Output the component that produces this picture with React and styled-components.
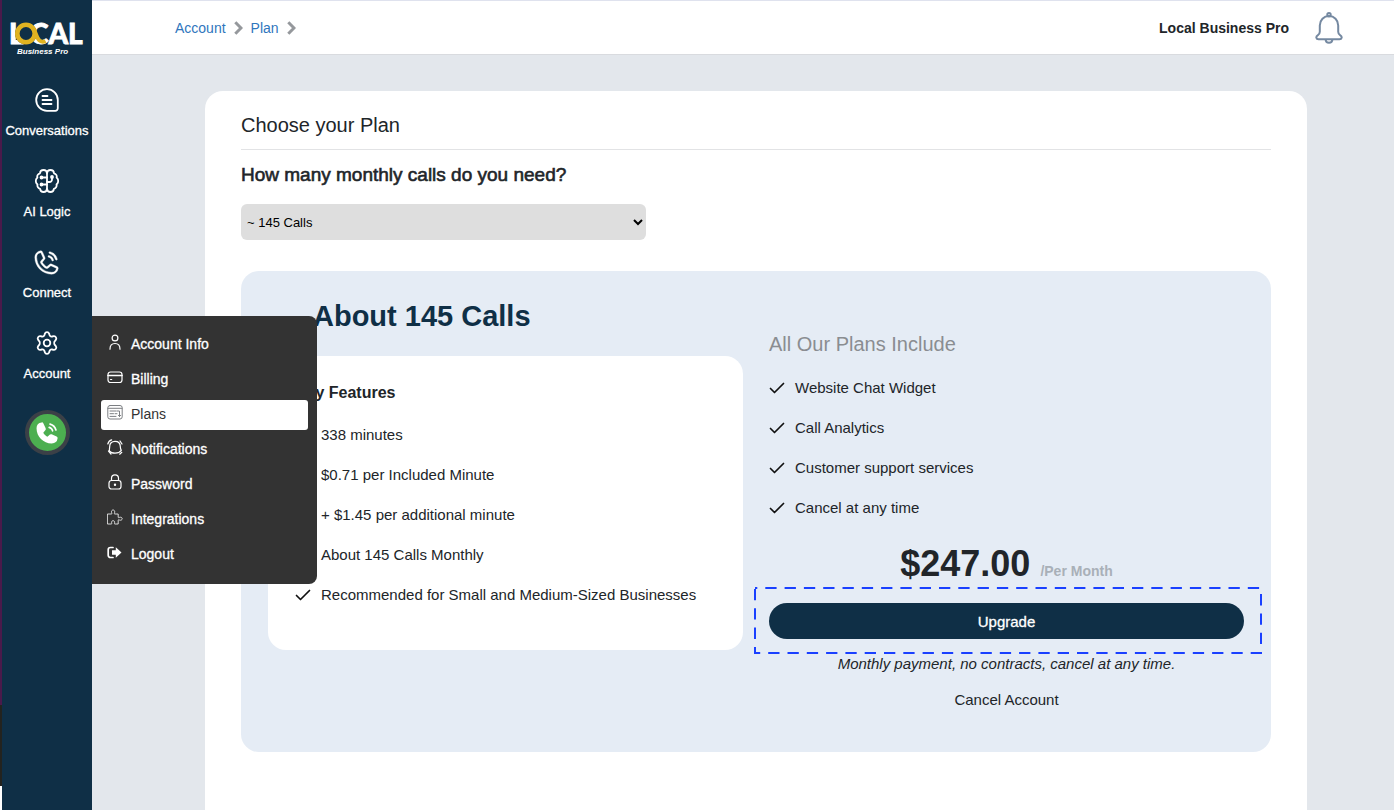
import React, { useState } from 'react';
import styled, { createGlobalStyle } from 'styled-components';
import { PiPhoneCall, PiPhoneCallFill } from 'react-icons/pi';

const navy = '#0f2f46';
const ink = '#212529';

const includedFeatures = [
  'Website Chat Widget',
  'Call Analytics',
  'Customer support services',
  'Cancel at any time',
];

const plans = {
  145: {
    title: 'About 145 Calls',
    price: '$247.00',
    features: [
      '338 minutes',
      '$0.71 per Included Minute',
      '+ $1.45 per additional minute',
      'About 145 Calls Monthly',
      'Recommended for Small and Medium-Sized Businesses',
    ],
  },
};

const Logo = () => (
  <LogoSvg viewBox="-1 -8 76 48" role="img" aria-label="Local Business Pro">
    <g fontFamily="Lato, sans-serif" fontWeight="900" fontSize="28" fill="#fff" stroke="#fff" strokeWidth=".8">
      <text x="-1" y="24">L</text>
      <text x="20" y="24">CAL</text>
    </g>
    <circle cx="16" cy="13.500" r="10.800" fill={navy} />
    <circle cx="16" cy="13.500" r="8.700" fill="none" stroke="#e0b321" strokeWidth="4.600" />
    <path d="M22.500 7.500c3 3 3.500 10 7 13 2 1.500 4 1.500 6 .5" fill="none" stroke="#e0b321" strokeWidth="4" />
    <text x="7" y="34" fontFamily="Liberation Sans, Arial, sans-serif" fontSize="8" fontWeight="700" fontStyle="italic" fill="#fff">
      Business Pro
    </text>
  </LogoSvg>
);

const ChatIcon = () => (
  <NavSvg viewBox="0 0 24 24">
    <path d="M12 1.200a10.800 10.800 0 1 0 0 21.600h8.300a2.500 2.500 0 0 0 2.500-2.500V12A10.800 10.800 0 0 0 12 1.200z" />
    <path d="M7.500 8h5M7.500 12h9M7.500 16h9" />
  </NavSvg>
);

const BrainIcon = () => (
  <NavSvg viewBox="0 0 24 24">
    <path d="M12 4.200C11.800 2.200 10.300 1 8.600 1 6.600 1 5.100 2.400 5 4.300 3 4.800 1.800 6.600 2.400 8.600 1.300 9.500.8 10.700.8 12s.6 2.600 1.700 3.500c-.5 2.100.8 3.900 2.600 4.300.2 1.900 1.700 3.200 3.500 3.200s3.200-1.300 3.400-3.200z" />
    <path d="M12 4.200C12.200 2.200 13.700 1 15.400 1c2 0 3.500 1.400 3.600 3.300 2 .5 3.200 2.300 2.600 4.300 1.100.9 1.600 2.100 1.600 3.400s-.6 2.600-1.700 3.500c.5 2.100-.8 3.900-2.600 4.300-.2 1.900-1.700 3.200-3.500 3.200S12.200 21.700 12 19.800" />
    <path d="M12 8.500H7M12 15.500H7M12 13h2.500A2.500 2.500 0 0 0 17 10.500V8.500" />
    <circle cx="6.500" cy="8.500" r="1" />
    <circle cx="6.500" cy="15.500" r="1" />
    <circle cx="17" cy="8" r="1" />
  </NavSvg>
);

const GearIcon = () => (
  <NavSvg viewBox="0 0 24 24">
    <path d="M9.900 2.600c.7-1.900 3.500-1.900 4.200 0l.5 1.500c.4 1 1.400 1.600 2.500 1.400l1.600-.3c2-.3 3.400 2.100 2.100 3.700l-1 1.200c-.8.900-.8 2.900 0 3.800l1 1.200c1.300 1.600-.1 4-2.100 3.700l-1.600-.3c-1.100-.2-2.100.4-2.500 1.400l-.5 1.500c-.7 1.900-3.500 1.900-4.200 0l-.5-1.500c-.4-1-1.400-1.600-2.500-1.400l-1.600.3c-2 .3-3.400-2.100-2.100-3.700l1-1.200c.8-.9.8-2.900 0-3.800l-1-1.200c-1.300-1.600.1-4 2.100-3.700l1.600.3c1.100.2 2.100-.4 2.500-1.400z" />
    <circle cx="12" cy="12" r="3.300" />
  </NavSvg>
);

const BellIcon = () => (
  <svg width="28" height="32" viewBox="0 0 28 32" fill="none" stroke="#7589a1" strokeWidth="2" aria-hidden="true">
    <path d="M4.800 13.500C4.800 8 8.800 4 14 4s9.200 4 9.200 9.500v6.200c0 1.500.6 2.500 1.900 3.400 2.600 1.700 1.700 4.100-.6 4.100h-21c-2.300 0-3.200-2.400-.6-4.100 1.300-.9 1.900-1.900 1.900-3.400z" />
    <circle cx="14" cy="2.800" r="1.700" />
    <path d="M10.600 27.500c.2 4.300 6.600 4.300 6.800 0" />
  </svg>
);

const Chevron = () => (
  <svg width="9" height="14" viewBox="0 0 9 14" fill="none" stroke="#95989c" strokeWidth="3" aria-hidden="true">
    <path d="M1.300 1.300 7 7l-5.700 5.700" />
  </svg>
);

const Check = () => (
  <svg width="16" height="12" viewBox="0 0 16 12" fill="none" stroke="#111" strokeWidth="1.700" strokeLinecap="round" strokeLinejoin="round" aria-hidden="true">
    <path d="M1.500 6.500 5.500 10.500 14.500 1.500" />
  </svg>
);

const menuIcons = {
  user: (
    <>
      <circle cx="8" cy="4" r="2.900" />
      <path d="M3 15.200c0-3.500 2-5.700 5-5.700s5 2.200 5 5.700" />
    </>
  ),
  card: (
    <>
      <rect x="1" y="3" width="14" height="10.500" rx="2.500" />
      <path d="M1 6.500h14" strokeWidth="1.600" />
      <path d="M3.500 10.500h1.200" />
    </>
  ),
  plan: (
    <g stroke="#7c7f83" strokeWidth="1">
      <rect x=".8" y="1.500" width="14.400" height="13.500" rx="2.200" />
      <path d="M1 4.300h14M3 7h6M3 9.700h3.500M8 9.700h2M3 12.400h6M10 7h2.500v5.500M11.400 11.300l1.100 1.200 1.100-1.200" />
    </g>
  ),
  alarm: (
    <>
      <path d="M8 2.300c3.300 0 5.300 2.300 5.300 5.300 0 1.700.4 2.800 1 3.700-1 1.500-3.700 2.800-6.300 2.800s-4.600-.8-5.400-2c-.7-1 .1-2.600.1-4.500 0-3.300 2-5.300 5.300-5.300z" />
      <path d="M.8 5C1.300 3 2.800 1.300 4.700.8M15 5l-2-3M1.500 12l2.500 3M14.800 13.300 12.700 15.200" />
    </>
  ),
  lock: (
    <>
      <rect x="2" y="6.500" width="12" height="8.500" rx="2.500" />
      <path d="M4.500 6.500V4.300a3.500 3.500 0 0 1 7 0v2.200" />
      <circle cx="8" cy="10.700" r=".6" fill="currentColor" />
    </>
  ),
  puzzle: (
    <path
      strokeWidth=".8"
      d="M.8 5h3.700c.6 0 .3-.8.1-1.400C4.200 2 5 1 6.100 1s1.900 1 1.500 2.600c-.2.600-.5 1.400.1 1.400h3.500v3.200c0 .7.700.4 1.200.2 1.500-.5 2.800.1 2.800 1.300s-1.300 1.900-2.800 1.300c-.5-.2-1.200-.5-1.200.2V15H7.800c-.6 0-.3-.8-.2-1.400.2-1.200-.5-1.900-1.500-1.900s-1.700.7-1.500 1.900c.1.600.4 1.400-.2 1.400H.8z"
    />
  ),
  logout: (
    <>
      <path d="M6 3.500H3.500A2.300 2.300 0 0 0 1.200 5.800v5.400a2.300 2.300 0 0 0 2.300 2.300H6" strokeWidth="1.700" />
      <path d="M5 6.300h3.800v-3l5.700 5.200-5.700 5.200v-3H5z" fill="currentColor" stroke="none" />
    </>
  ),
};

const menuItems = [
  { label: 'Account Info', icon: 'user' },
  { label: 'Billing', icon: 'card' },
  { label: 'Plans', icon: 'plan' },
  { label: 'Notifications', icon: 'alarm' },
  { label: 'Password', icon: 'lock' },
  { label: 'Integrations', icon: 'puzzle' },
  { label: 'Logout', icon: 'logout' },
];

const FeatureList = ({ items }) => (
  <List>
    {items.map((item) => (
      <ListRow key={item}>
        <Check />
        <span>{item}</span>
      </ListRow>
    ))}
  </List>
);

const App = () => {
  const [calls, setCalls] = useState('145');
  const [page, setPage] = useState('Plans');
  const plan = plans[calls];

  return (
    <Layout>
      <GlobalStyle />
      <Edge />
      <Sidebar>
        <Logo />
        <Nav>
          <NavItem>
            <NavLink href="#conversations"><ChatIcon />Conversations</NavLink>
          </NavItem>
          <NavItem>
            <NavLink href="#logic"><BrainIcon />AI Logic</NavLink>
          </NavItem>
          <NavItem>
            <NavLink href="#connect"><PhoneIcon />Connect</NavLink>
          </NavItem>
          <NavItem>
            <NavLink href="#account"><GearIcon />Account</NavLink>
            <Menu>
              {menuItems.map(({ label, icon }) => (
                <MenuLink
                  key={label}
                  href={`#${icon}`}
                  $active={page === label}
                  onClick={() => setPage(label)}
                >
                  <MenuSvg viewBox="0 0 16 16">{menuIcons[icon]}</MenuSvg>
                  {label}
                </MenuLink>
              ))}
            </Menu>
          </NavItem>
        </Nav>
        <CallButton type="button" aria-label="Call">
          <PiPhoneCallFill size={27} />
        </CallButton>
      </Sidebar>

      <Page>
        <Header>
          <Crumbs aria-label="Breadcrumb">
            <a href="#account">Account</a>
            <Chevron />
            <a href="#plan">Plan</a>
            <Chevron />
          </Crumbs>
          <Business>Local Business Pro</Business>
          <BellButton type="button" aria-label="Notifications"><BellIcon /></BellButton>
        </Header>

        <Card>
          <PageTitle>Choose your Plan</PageTitle>
          <Question htmlFor="calls">How many monthly calls do you need?</Question>
          <CallsSelect id="calls" value={calls} onChange={(e) => setCalls(e.target.value)}>
            <option value="145">~ 145 Calls</option>
          </CallsSelect>

          <PlanPanel>
            <div>
              <PlanTitle>{plan.title}</PlanTitle>
              <FeatureCard>
                <FeatureTitle>Key Features</FeatureTitle>
                <FeatureList items={plan.features} />
              </FeatureCard>
            </div>
            <Offer>
              <OfferTitle>All Our Plans Include</OfferTitle>
              <FeatureList items={includedFeatures} />
              <PriceRow>
                <Price>{plan.price}</Price>
                <Period>/Per Month</Period>
              </PriceRow>
              <UpgradeWrap>
                <Upgrade type="button">Upgrade</Upgrade>
                <Highlight aria-hidden="true">
                  <rect x="1" y="1" />
                </Highlight>
              </UpgradeWrap>
              <Note>Monthly payment, no contracts, cancel at any time.</Note>
              <CancelLink href="#cancel">Cancel Account</CancelLink>
            </Offer>
          </PlanPanel>
        </Card>
      </Page>
    </Layout>
  );
};

const GlobalStyle = createGlobalStyle`
  * {
    box-sizing: border-box;
  }
  body {
    margin: 0;
    background: #e3e7ec;
    color: ${ink};
    font-family: "Liberation Sans", Arial, sans-serif;
    font-size: 14px;
    line-height: 20px;
  }
  h1, h2, h3, p, ul {
    margin: 0;
    padding: 0;
    font-weight: 400;
  }
  a {
    text-decoration: none;
  }
  button, select {
    font-family: inherit;
  }
`;

const Layout = styled.div`
  display: flex;
  min-height: 100vh;
`;

const Edge = styled.div`
  flex: 0 0 2px;
  background: linear-gradient(#4a1a4b 87%, #23231f 87% 97%, #fff 97%);
`;

const Sidebar = styled.aside`
  position: relative;
  z-index: 2;
  flex: 0 0 90px;
  display: flex;
  flex-direction: column;
  align-items: center;
  padding-top: 12px;
  background: ${navy};
  color: #fff;
`;

const LogoSvg = styled.svg`
  width: 76px;
  height: 48px;
`;

const Nav = styled.nav`
  display: flex;
  flex-direction: column;
  gap: 28px;
  width: 100%;
  margin-top: 26px;
`;

const NavItem = styled.div`
  position: relative;
`;

const NavLink = styled.a`
  display: grid;
  grid-template-rows: 28px 16px;
  gap: 9px;
  place-items: center;
  color: #fff;
  font-size: 13px;
  line-height: 16px;
  -webkit-text-stroke: 0.3px;
`;

const NavSvg = styled.svg`
  width: 24px;
  height: 24px;
  fill: none;
  stroke: currentColor;
  stroke-width: 1.8;
  stroke-linecap: round;
  stroke-linejoin: round;
`;

const PhoneIcon = styled(PiPhoneCall)`
  width: 30px;
  height: 30px;
  stroke-width: 3;
`;

const Menu = styled.div`
  position: absolute;
  left: 100%;
  top: -13px;
  display: flex;
  flex-direction: column;
  gap: 5px;
  width: 225px;
  padding: 14px 9px;
  border-radius: 0 8px 8px 0;
  background: #333;
`;

const MenuLink = styled.a`
  display: flex;
  align-items: center;
  gap: 8px;
  height: 30px;
  padding: 0 6px 2px;
  border-radius: 3px;
  background: ${(props) => (props.$active ? '#fff' : 'transparent')};
  color: ${(props) => (props.$active ? '#333' : '#fff')};
  font-size: 14px;
  -webkit-text-stroke: ${(props) => (props.$active ? '0' : '0.3px')};
`;

const MenuSvg = styled.svg`
  width: 16px;
  height: 16px;
  margin-bottom: 4px;
  fill: none;
  stroke: currentColor;
  stroke-width: 1.2;
  stroke-linecap: round;
  stroke-linejoin: round;
`;

const CallButton = styled.button`
  display: grid;
  place-items: center;
  width: 45px;
  height: 45px;
  margin-top: 28px;
  padding: 0;
  border: 4px solid #3b4047;
  border-radius: 50%;
  background: #4caf50;
  color: #fff;
`;

const Page = styled.div`
  flex: 1;
  display: flex;
  flex-direction: column;
  border-top: 1px solid #dfe2ee;
`;

const Header = styled.header`
  display: flex;
  align-items: center;
  height: 54px;
  padding: 0 51px 0 83px;
  border-bottom: 1px solid #d9dbdf;
  background: #fff;
`;

const Crumbs = styled.nav`
  flex: 1;
  display: flex;
  align-items: center;
  gap: 8px;

  a {
    color: #2f76bd;
  }
`;

const Business = styled.span`
  font-weight: 700;
`;

const BellButton = styled.button`
  margin-left: 26px;
  padding: 0;
  border: 0;
  background: none;
  line-height: 0;
`;

const Card = styled.main`
  flex: 1;
  margin: 36px 87px 0 113px;
  padding: 22px 36px 58px;
  border-radius: 18px 18px 0 0;
  background: #fff;
`;

const PageTitle = styled.h1`
  padding-bottom: 12px;
  border-bottom: 1px solid #e2e3e5;
  font-size: 20px;
  line-height: 24px;
`;

const Question = styled.label`
  display: block;
  margin: 13px 0 17px;
  font-size: 19px;
  line-height: 24px;
  -webkit-text-stroke: 0.6px;
`;

const CallsSelect = styled.select`
  display: block;
  width: 405px;
  max-width: 100%;
  height: 36px;
  padding: 0 2px;
  border: 0;
  border-radius: 6px;
  background: #dedede;
  color: #000;
  font-size: 13px;
`;

const PlanPanel = styled.section`
  display: grid;
  grid-template-columns: 1fr 1fr;
  gap: 26px;
  margin-top: 31px;
  padding: 27px 27px 42px;
  border-radius: 18px;
  background: #e5ecf5;
`;

const PlanTitle = styled.h2`
  margin-bottom: 22px;
  padding-left: 45px;
  color: ${navy};
  font-size: 29px;
  font-weight: 700;
  line-height: 36px;
`;

const FeatureCard = styled.div`
  padding: 27px 27px 43px;
  border-radius: 18px;
  background: #fff;
`;

const FeatureTitle = styled.h3`
  margin-bottom: 20px;
  font-size: 16px;
  font-weight: 700;
`;

const List = styled.ul`
  display: flex;
  flex-direction: column;
  gap: 16px;
  list-style: none;
`;

const ListRow = styled.li`
  display: flex;
  align-items: center;
  gap: 10px;
  font-size: 15px;
  line-height: 24px;
`;

const Offer = styled.div`
  display: flex;
  flex-direction: column;
  padding-top: 34px;
`;

const OfferTitle = styled.h2`
  margin-bottom: 20px;
  color: #8a8d91;
  font-size: 20px;
  line-height: 24px;
`;

const PriceRow = styled.p`
  display: flex;
  align-items: baseline;
  justify-content: center;
  gap: 10px;
  margin: 24px 0 19px;
`;

const Price = styled.span`
  font-size: 36px;
  font-weight: 700;
  line-height: 40px;
`;

const Period = styled.span`
  color: #a9b0b8;
  font-weight: 700;
`;

const UpgradeWrap = styled.div`
  position: relative;
  margin-bottom: 15px;
`;

const Upgrade = styled.button`
  display: block;
  width: 100%;
  height: 36px;
  border: 0;
  border-radius: 18px;
  background: ${navy};
  color: #fff;
  font-size: 15px;
  -webkit-text-stroke: 0.3px;
`;

/* dashed callout drawn over the button */
const Highlight = styled.svg`
  position: absolute;
  top: -16px;
  left: -15px;
  width: calc(100% + 33px);
  height: calc(100% + 31px);
  pointer-events: none;

  rect {
    width: calc(100% - 2px);
    height: calc(100% - 2px);
    fill: none;
    stroke: #1a40ff;
    stroke-width: 2;
    stroke-dasharray: 11.3 8;
    stroke-dashoffset: 9;
  }
`;

const Note = styled.p`
  font-size: 15px;
  font-style: italic;
  text-align: center;
`;

const CancelLink = styled.a`
  margin-top: 16px;
  color: ${ink};
  font-size: 15px;
  text-align: center;
`;

export default App;
